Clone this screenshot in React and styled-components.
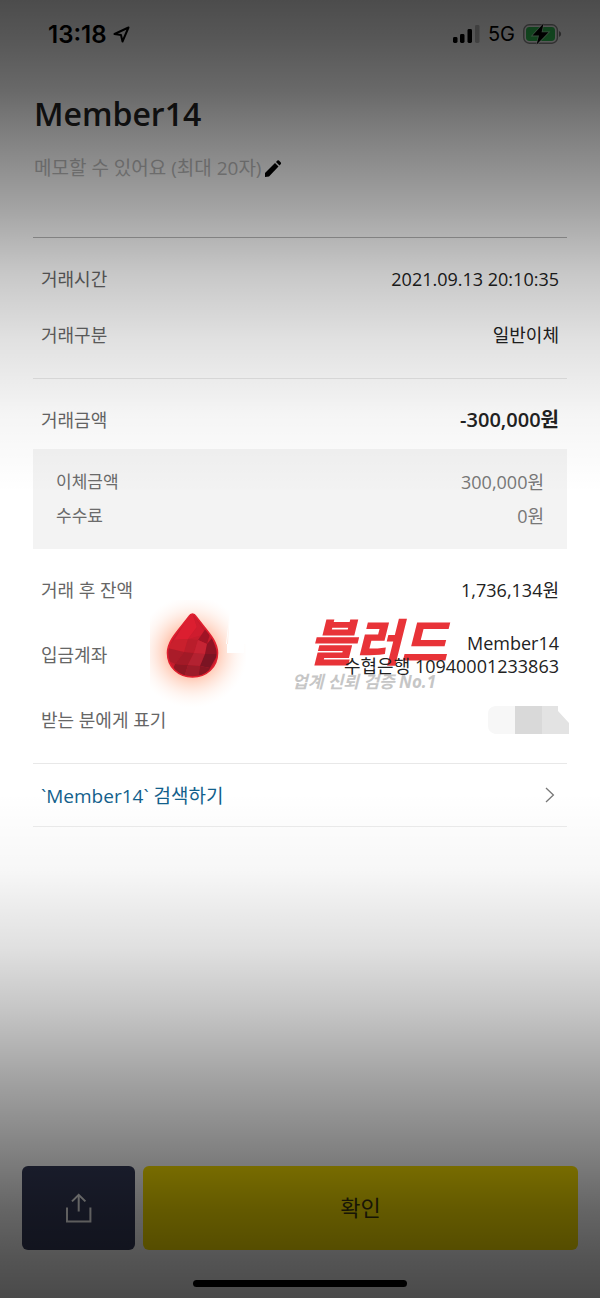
import React from "react";
import styled, { createGlobalStyle } from "styled-components";

const details = [
  { label: "거래시간", value: "2021.09.13 20:10:35" },
  { label: "거래구분", value: "일반이체" },
];

const breakdown = [
  { label: "이체금액", value: "300,000원" },
  { label: "수수료", value: "0원" },
];

const LocationIcon = () => (
  <svg width="17" height="17" viewBox="0 0 17 17" aria-hidden="true">
    <path
      d="M15.500 1.500 L1.500 8 L8 9 L9.500 15.500 Z"
      fill="none"
      stroke="#000"
      strokeWidth="2"
      strokeLinejoin="round"
    />
  </svg>
);

const SignalIcon = () => (
  <svg width="27" height="18" viewBox="0 0 27 18" aria-hidden="true">
    <rect x="0" y="12" width="4.500" height="6" rx="1.4" />
    <rect x="7" y="9" width="4.500" height="9" rx="1.4" />
    <rect x="14.500" y="4" width="4.500" height="14" rx="1.4" />
    <rect x="22" y="0" width="4.500" height="18" rx="1.4" fillOpacity="0.25" />
  </svg>
);

const BatteryIcon = () => (
  <svg width="39" height="22" viewBox="0 0 39 22" aria-hidden="true">
    <rect
      x="0.8"
      y="1.8"
      width="33.6"
      height="18.4"
      rx="5.4"
      fill="none"
      stroke="#000"
      strokeOpacity="0.45"
      strokeWidth="1.4"
    />
    <rect x="3" y="4" width="29" height="14" rx="3.4" fill="#34c759" />
    <path d="M36 8 Q38.2 9 38.2 11 Q38.2 13 36 14 Z" fillOpacity="0.5" />
    <path
      d="M20.5 0.5 L9.5 12.6 H16 L13.6 21.5 L25.5 9.2 H18.6 Z"
      stroke="#fff"
      strokeOpacity="0.6"
      strokeWidth="1.6"
      paintOrder="stroke"
    />
  </svg>
);

const PencilIcon = () => (
  <svg width="18" height="18" viewBox="0 0 18 18" aria-hidden="true">
    <path d="M1 18 V14 L11 4 L14.500 7.500 L5 17.500 Z" />
    <path d="M12 3 L13.4 1.6 Q14.2 1 15 1.600 L16.8 3.4 Q17.400 4.200 16.8 5 L15.500 6.400 Z" />
  </svg>
);

const ChevronIcon = () => (
  <svg width="10" height="16" viewBox="0 0 10 16" aria-hidden="true">
    <path d="M1 1 L8.4 8 L1 15" fill="none" stroke="#777" strokeWidth="1.3" />
  </svg>
);

const ShareIcon = () => (
  <svg width="26" height="30" viewBox="0 0 26 30" aria-hidden="true">
    <g fill="none" stroke="#f4f4f4" strokeWidth="2">
      <path d="M1 14.500 V28.6 H24.4 V14.500" />
      <path d="M12.7 18.5 V2" />
      <path d="M6 8.4 L12.7 1.8 L19.4 8.4" />
    </g>
  </svg>
);

const MaskedName = () => (
  <svg width="81" height="28" viewBox="0 0 81 28" role="img" aria-label="Hidden name">
    <path d="M7 0 H27 V28 H7 Q0 26 0 20 V8 Q0 1 7 0 Z" fill="#f7f7f7" />
    <path d="M27 0 H54 V28 H27 Z" fill="#d9d9d9" />
    <path d="M54 0 H70 V5 L81 17 V28 H54 Z" fill="#e3e3e3" />
  </svg>
);

const dropShape =
  "M42.5 14 Q44.5 14 46 16.500 C56 30 67.500 40 67.500 53 C67.500 67 56.500 77 42.5 77 C28.500 77 17.500 67 17.500 53 C17.500 40 29 30 39 16.500 Q40.500 14 42.5 14 Z";

const BloodDrop = () => (
  <svg width="96" height="112" viewBox="0 0 96 112" aria-hidden="true">
    <defs>
      <radialGradient id="glow" cx="42" cy="52" r="56" gradientUnits="userSpaceOnUse">
        <stop offset="0.3" stopColor="#ff7040" stopOpacity="0.6" />
        <stop offset="0.55" stopColor="#ff9468" stopOpacity="0.34" />
        <stop offset="0.8" stopColor="#ffc0a4" stopOpacity="0.14" />
        <stop offset="1" stopColor="#ffe0d0" stopOpacity="0" />
      </radialGradient>
      <clipPath id="drop">
        <path d={dropShape} />
      </clipPath>
    </defs>
    <rect width="96" height="112" fill="url(#glow)" />
    <path d="M80 10 L76 44 H94 V53 H77 V44 L80 10 H96 V44 H78 Z" fill="#fff" />
    <g clipPath="url(#drop)">
      <path d="M0 0 H96 V112 H0 Z" fill="#c51c2c" />
      <path d="M42 12 L24 40 L38 39 L47 27 Z" fill="#dc1e30" />
      <path d="M42 12 L47 27 L38 39 L56 34 Z" fill="#cf1c2e" />
      <path d="M56 28 L48 40 L57 44 L60 34 Z" fill="#a01425" />
      <path d="M24 40 L38 39 L34 52 L17 48 Z" fill="#c9202d" />
      <path d="M38 39 L48 40 L44 53 L34 52 Z" fill="#b91d2b" />
      <path d="M48 40 L57 44 L55 54 L44 53 Z" fill="#c62434" />
      <path d="M57 44 L62 38 L68 54 L55 54 Z" fill="#8e1424" />
      <path d="M17 48 L34 52 L25 64 L17 60 Z" fill="#aa1c29" />
      <path d="M34 52 L44 53 L38 65 L25 64 Z" fill="#a21a27" />
      <path d="M44 53 L55 54 L50 66 L38 65 Z" fill="#b32231" />
      <path d="M55 54 L68 54 L60 68 L50 66 Z" fill="#7b1423" />
      <path d="M25 64 L38 65 L34 78 L22 72 Z" fill="#8f1723" />
      <path d="M38 65 L50 66 L48 78 H34 Z" fill="#9c1c29" />
      <path d="M50 66 L60 68 L56 78 H48 Z" fill="#871623" />
    </g>
    <path d={dropShape} fill="none" stroke="#e0202f" strokeWidth="1.6" />
  </svg>
);

const App = () => {
  return (
    <>
      <GlobalStyle />
      <Screen>
        <StatusBar>
          <StatusGroup>
            <Clock>13:18</Clock>
            <LocationIcon />
          </StatusGroup>
          <StatusGroup $gap="8px">
            <SignalIcon />
            <Network>5G</Network>
            <BatteryIcon />
          </StatusGroup>
        </StatusBar>

        <Sheet>
          <Header>
            <Title>Member14</Title>
            <MemoButton type="button">
              메모할 수 있어요 (최대 20자)
              <PencilIcon />
            </MemoButton>
          </Header>

          <Section>
            {details.map((item) => (
              <Row key={item.label}>
                <Label>{item.label}</Label>
                <Value>{item.value}</Value>
              </Row>
            ))}
          </Section>

          <AmountRow>
            <Label>거래금액</Label>
            <Value $bold>-300,000원</Value>
          </AmountRow>
          <Breakdown>
            {breakdown.map((item) => (
              <SubRow key={item.label}>
                <SubLabel>{item.label}</SubLabel>
                <SubValue>{item.value}</SubValue>
              </SubRow>
            ))}
          </Breakdown>

          <Section>
            <Watermark>
              <BloodDrop />
              <Brand>
                <BrandName>블러드</BrandName>
                <BrandTag>업계 신뢰 검증 No.1</BrandTag>
              </Brand>
            </Watermark>
            <Row>
              <Label>거래 후 잔액</Label>
              <Value>1,736,134원</Value>
            </Row>
            <Row>
              <Label>입금계좌</Label>
              <Value $compact>
                Member14
                <br />
                수협은행 10940001233863
              </Value>
            </Row>
            <Row>
              <Label>받는 분에게 표기</Label>
              <MaskedValue>
                <MaskedName />
              </MaskedValue>
            </Row>
          </Section>

          <SearchLink href="#search">
            `Member14` 검색하기
            <ChevronIcon />
          </SearchLink>
        </Sheet>

        <Footer>
          <ShareButton type="button" aria-label="Share">
            <ShareIcon />
          </ShareButton>
          <ConfirmButton type="button">확인</ConfirmButton>
        </Footer>
        <HomeIndicator />
        <Shade />
      </Screen>
    </>
  );
};

const GlobalStyle = createGlobalStyle`
  * {
    box-sizing: border-box;
  }

  body {
    margin: 0;
    background: #fff;
    font-family: "Open Sans", "Noto Sans CJK KR", sans-serif;
  }

  h1, dl, dd {
    margin: 0;
  }

  svg {
    display: block;
    flex-shrink: 0;
  }
`;

const Screen = styled.div`
  position: relative;
  display: flex;
  flex-direction: column;
  min-height: 100vh;
  background: #fff;
`;

const StatusBar = styled.div`
  display: flex;
  align-items: center;
  justify-content: space-between;
  height: 68px;
  padding: 0 38px 0 48px;
  font-family: Inter, sans-serif;
  color: #000;
`;

const StatusGroup = styled.div`
  display: flex;
  align-items: center;
  gap: ${(props) => props.$gap || "6px"};
`;

const Clock = styled.span`
  font-size: 24px;
  font-weight: 600;
`;

const Network = styled.span`
  font-size: 20px;
  font-weight: 400;
`;

const Sheet = styled.main`
  padding: 0 33px;
`;

const Header = styled.header`
  padding: 26px 1px 57px;
  border-bottom: 1px solid #b8b8b8;
`;

const Title = styled.h1`
  margin-bottom: 22px;
  font-size: 32px;
  font-weight: 600;
  line-height: 40px;
  color: #222;
`;

const MemoButton = styled.button`
  display: flex;
  align-items: center;
  gap: 3px;
  padding: 0;
  border: 0;
  background: none;
  font-family: inherit;
  font-size: 19px;
  line-height: 24px;
  color: #bdbdbd;
`;

const Section = styled.dl`
  position: relative;
  display: flex;
  flex-direction: column;
  gap: 28px;
  padding: 27px 0 29px;
  border-bottom: 1px solid #e8e8e8;
`;

const Row = styled.div`
  position: relative;
  display: flex;
  align-items: center;
  justify-content: space-between;
  padding: 0 8px;
`;

const AmountRow = styled(Row).attrs({ as: "dl" })`
  padding-top: 27px;
  padding-bottom: 15px;
`;

const Label = styled.dt`
  font-size: 18px;
  line-height: 28px;
  color: #666;
`;

const Value = styled.dd`
  font-size: ${(props) => (props.$bold ? "20px" : "18px")};
  font-weight: ${(props) => (props.$bold ? 600 : 400)};
  line-height: ${(props) => (props.$compact ? "23px" : "28px")};
  text-align: right;
  color: #222;
`;

const MaskedValue = styled.dd`
  margin-right: -10px;
`;

const Breakdown = styled.dl`
  display: flex;
  flex-direction: column;
  gap: 10px;
  padding: 21px 23px;
  background: #f3f3f3;
`;

const SubRow = styled.div`
  display: flex;
  justify-content: space-between;
  line-height: 24px;
`;

const SubLabel = styled.dt`
  font-size: 17px;
  color: #6b6b6b;
`;

const SubValue = styled.dd`
  font-size: 18px;
  color: #777;
`;

const Watermark = styled.div`
  position: absolute;
  top: 51px;
  left: 117px;
  display: flex;
  gap: 46px;
`;

const Brand = styled.div`
  padding-top: 14px;
  font-style: italic;
  white-space: nowrap;
`;

const BrandName = styled.div`
  padding-left: 17px;
  font-size: 50px;
  font-weight: 900;
  line-height: 56px;
  color: #e83338;
`;

const BrandTag = styled.div`
  font-size: 17px;
  font-weight: 700;
  line-height: 24px;
  color: #c6c6c6;
`;

const SearchLink = styled.a`
  display: flex;
  align-items: center;
  justify-content: space-between;
  height: 63px;
  padding: 0 12px 0 8px;
  border-bottom: 1px solid #ececec;
  font-size: 19px;
  text-decoration: none;
  color: #135f8c;
`;

const Footer = styled.footer`
  display: flex;
  gap: 8px;
  margin-top: auto;
  padding: 0 22px 30px;
`;

const ShareButton = styled.button`
  display: flex;
  align-items: center;
  justify-content: center;
  width: 113px;
  height: 84px;
  border: 0;
  border-radius: 6px;
  background: #343a58;
`;

const ConfirmButton = styled.button`
  flex: 1;
  height: 84px;
  padding: 0 0 4px;
  border: 0;
  border-radius: 6px;
  background: #fae100;
  font-family: inherit;
  font-size: 22px;
  color: #3a3510;
`;

const HomeIndicator = styled.div`
  width: 214px;
  height: 7px;
  margin: 0 auto 11px;
  border-radius: 4px;
  background: #000;
`;

const Shade = styled.div`
  position: absolute;
  inset: 0;
  pointer-events: none;
  background: linear-gradient(
    rgba(0, 0, 0, 0.7) 0%,
    rgba(0, 0, 0, 0.66) 3%,
    rgba(0, 0, 0, 0.59) 7%,
    rgba(0, 0, 0, 0.51) 10%,
    rgba(0, 0, 0, 0.36) 16%,
    rgba(0, 0, 0, 0.22) 21%,
    rgba(0, 0, 0, 0.12) 26%,
    rgba(0, 0, 0, 0.04) 32%,
    rgba(0, 0, 0, 0) 38%,
    rgba(0, 0, 0, 0) 61%,
    rgba(0, 0, 0, 0.03) 67%,
    rgba(0, 0, 0, 0.12) 73%,
    rgba(0, 0, 0, 0.23) 78%,
    rgba(0, 0, 0, 0.36) 83%,
    rgba(0, 0, 0, 0.5) 89%,
    rgba(0, 0, 0, 0.6) 93%,
    rgba(0, 0, 0, 0.67) 97%,
    rgba(0, 0, 0, 0.71) 100%
  );
`;

export default App;
